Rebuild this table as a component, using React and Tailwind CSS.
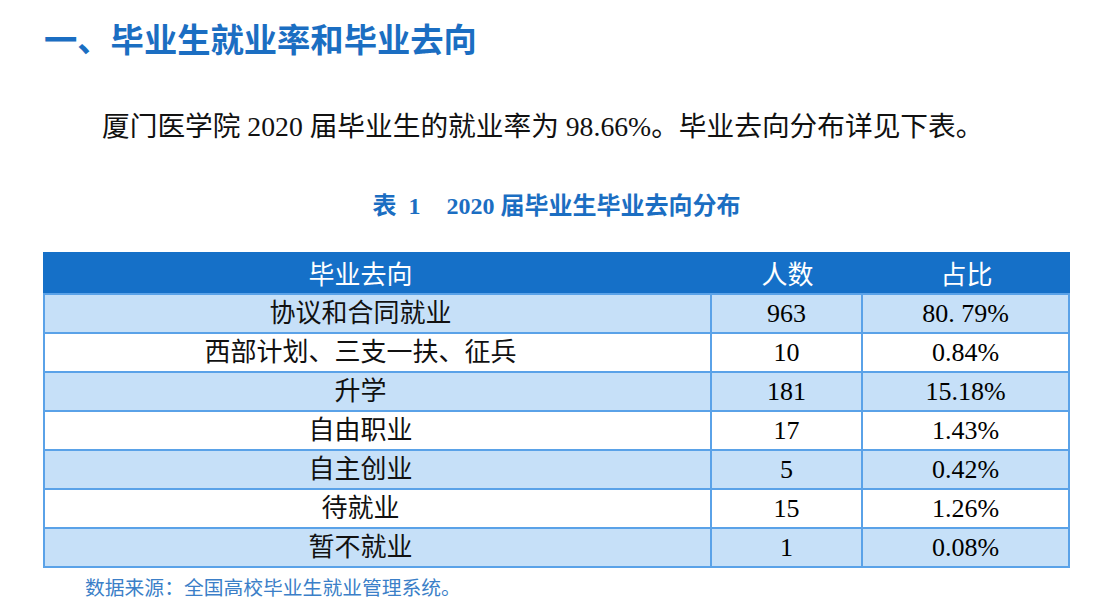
import React from "react";

const rows = [
  ["协议和合同就业", "963", "80. 79%", true],
  ["西部计划、三支一扶、征兵", "10", "0.84%", false],
  ["升学", "181", "15.18%", true],
  ["自由职业", "17", "1.43%", false],
  ["自主创业", "5", "0.42%", true],
  ["待就业", "15", "1.26%", false],
  ["暂不就业", "1", "0.08%", true],
];

const serif = { fontFamily: '"Liberation Serif", "Noto Sans CJK SC", serif' };
const sans = { fontFamily: '"Noto Sans CJK SC", "Noto Sans", sans-serif' };

export default function App() {
  return (
    <div className="w-[1102px] h-[607px] bg-white overflow-hidden text-black">
      <h1
        className="pt-[18px] pl-[44px] text-[33.3px] leading-[40px] font-bold text-[#1b6ec2]"
        style={sans}
      >
        一、毕业生就业率和毕业去向
      </h1>
      <p className="mt-[52px] pl-[102px] text-[27.7px] leading-[34px] text-[#111]" style={serif}>
        厦门医学院 2020 届毕业生的就业率为 98.66%。毕业去向分布详见下表。
      </p>
      <div
        className="mt-[47px] ml-[43px] w-[1027px] flex justify-center text-[24px] leading-[30px] font-bold text-[#1b6ec2]"
        style={serif}
      >
        <span>表</span>
        <span className="ml-[12px]">1</span>
        <span className="ml-[26px]">2020 届毕业生毕业去向分布</span>
      </div>
      <div className="mt-[31px] ml-[43px] w-[1027px] border-x-2 border-b-2 border-[#5aa2e8]">
        <div
          className="flex h-[41px] -mx-[2px] bg-[#1570c8] text-white text-[26px] leading-[41px]"
          style={sans}
        >
          <div className="w-[669px] pr-[34px] text-center">毕业去向</div>
          <div className="w-[151px] text-center">人数</div>
          <div className="flex-1 text-center">占比</div>
        </div>
        {rows.map(([a, b, c, shaded], i) => (
          <div
            key={i}
            className={`flex h-[39px] border-t-2 border-[#5aa2e8] text-[26px] leading-[37px] ${
              shaded ? "bg-[#c6e0f8]" : "bg-white"
            }`}
            style={serif}
          >
            <div className="w-[667px] pr-[34px] text-center border-r-2 border-[#5aa2e8] text-[#111]">{a}</div>
            <div className="w-[151px] text-center border-r-2 border-[#5aa2e8]">{b}</div>
            <div className="flex-1 text-center">{c}</div>
          </div>
        ))}
      </div>
      <div className="mt-[6px] pl-[85px] text-[19.8px] leading-[26px] text-[#3b7fc8]" style={sans}>
        数据来源：全国高校毕业生就业管理系统。
      </div>
    </div>
  );
}
